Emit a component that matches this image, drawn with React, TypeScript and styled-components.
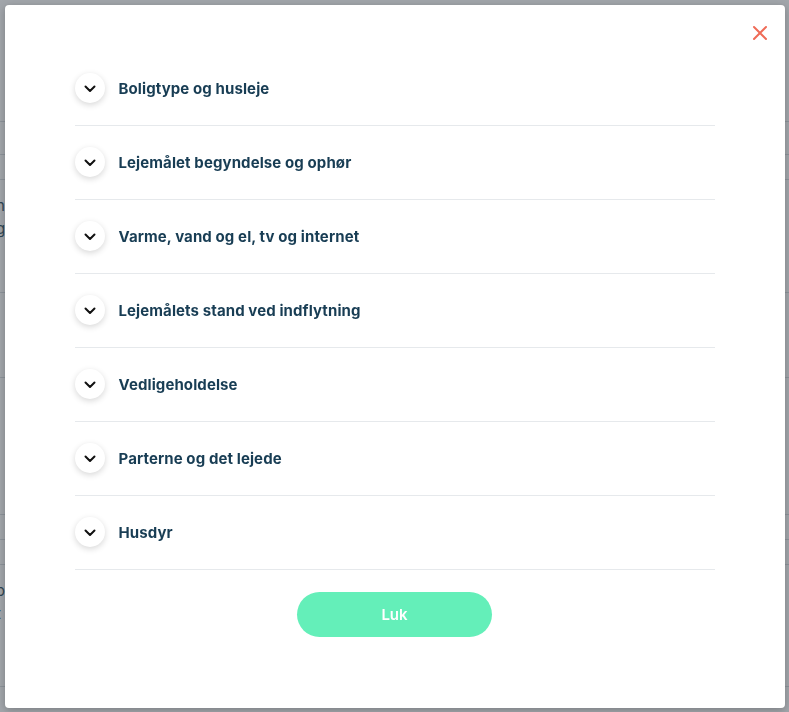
import styled, { createGlobalStyle } from "styled-components";

const GlobalStyle = createGlobalStyle`
  html, body {
    margin: 0;
    padding: 0;
    background: #ffffff;
    font-family: Inter, "Noto Sans", "Liberation Sans", sans-serif;
  }
`;

// de punkter som vises i listen
const Sections: string[] = [
  "Boligtype og husleje",
  "Lejemålet begyndelse og ophør",
  "Varme, vand og el, tv og internet",
  "Lejemålets stand ved indflytning",
  "Vedligeholdelse",
  "Parterne og det lejede",
  "Husdyr",
];

// baggrundssiden bag overlay (kun en smal kant er synlig)
const PageRows: { h: number; text?: string }[] = [
  { h: 122 },
  { h: 33 },
  { h: 25 },
  { h: 113, text: "n\ng" },
  { h: 85 },
  { h: 137 },
  { h: 25 },
  { h: 25 },
  { h: 122, text: "o\nt" },
];

const App: React.FC = () => {
  return (
    <>
      <GlobalStyle />
      <Page>
        {PageRows.map((row, i) => (
          <PageRow key={i} $h={row.h}>
            {row.text}
          </PageRow>
        ))}
      </Page>
      <Overlay>
        <Modal>
          <CloseButton aria-label="Luk">
            <svg width="16" height="16" viewBox="0 0 16 16">
              <path
                d="M2 2 L14 14 M14 2 L2 14"
                stroke="#ef6b57"
                strokeWidth="2"
                strokeLinecap="round"
              />
            </svg>
          </CloseButton>
          <List>
            {Sections.map((title) => (
              <Item key={title}>
                <Toggle>
                  <svg width="12" height="8" viewBox="0 0 12 8">
                    <path
                      d="M1.5 1.5 L6 6 L10.5 1.5"
                      fill="none"
                      stroke="#111111"
                      strokeWidth="2"
                      strokeLinecap="round"
                      strokeLinejoin="round"
                    />
                  </svg>
                </Toggle>
                <Title>{title}</Title>
              </Item>
            ))}
          </List>
          <Footer>
            <PrimaryButton>Luk</PrimaryButton>
          </Footer>
        </Modal>
      </Overlay>
    </>
  );
};
export default App;

const Page = styled.div`
  display: flex;
  flex-direction: column;
`;
const PageRow = styled.div<{ $h: number }>`
  height: ${(p) => p.$h}px;
  border-bottom: 1px solid #d9dde1;
  color: #2d4f61;
  font-size: 15px;
  line-height: 23px;
  padding-top: 14px;
  box-sizing: border-box;
  white-space: pre;
  margin-left: -4px;
`;
const Overlay = styled.div`
  position: fixed;
  inset: 0;
  background: rgba(48, 58, 68, 0.45);
  display: flex;
  align-items: center;
  justify-content: center;
`;
const Modal = styled.div`
  position: relative;
  width: 780px;
  box-sizing: border-box;
  padding: 47px 70px 71px;
  background: #ffffff;
  border-radius: 4px;
  box-shadow: 0 2px 8px rgba(0, 0, 0, 0.25);
`;
const CloseButton = styled.button`
  position: absolute;
  top: 19px;
  right: 16px;
  width: 18px;
  height: 18px;
  padding: 0;
  border: none;
  background: none;
  display: flex;
  align-items: center;
  justify-content: center;
  cursor: pointer;
`;
const List = styled.ul`
  list-style: none;
  margin: 0;
  padding: 0;
`;
const Item = styled.li`
  height: 74px;
  display: flex;
  align-items: center;
  gap: 14px;
  border-bottom: 1px solid #e6e9ec;
  box-sizing: border-box;
`;
const Toggle = styled.span`
  width: 30px;
  height: 30px;
  border-radius: 50%;
  background: #ffffff;
  box-shadow: 0 2px 6px rgba(0, 0, 0, 0.16);
  display: flex;
  align-items: center;
  justify-content: center;
  flex-shrink: 0;
  padding-top: 1px;
  box-sizing: border-box;
`;
const Title = styled.span`
  font-size: 15px;
  font-weight: 700;
  color: #183d54;
  letter-spacing: 0.1px;
`;
const Footer = styled.div`
  display: flex;
  justify-content: center;
  margin-top: 22px;
`;
const PrimaryButton = styled.button`
  width: 195px;
  height: 45px;
  border: none;
  border-radius: 23px;
  background: #64efb9;
  color: #ffffff;
  font-family: Inter, "Noto Sans", "Liberation Sans", sans-serif;
  font-size: 15px;
  font-weight: 600;
  cursor: pointer;
`;
